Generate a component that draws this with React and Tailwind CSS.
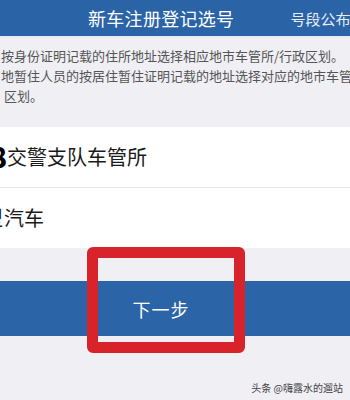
export default function App() {
  const font = { fontFamily: '"Noto Sans CJK SC", "Noto Sans", sans-serif' };
  return (
    <div className="relative w-[350px] h-[400px] overflow-hidden bg-[#efeff4]" style={font}>
      <div className="flex items-center h-[36px] bg-[#2b63a7] pl-[88px] gap-[56px] whitespace-nowrap overflow-hidden">
        <div className="text-white text-[18px] leading-none tracking-[0.3px]">新车注册登记选号</div>
        <div className="text-[#e8eef8] text-[15px] leading-none">号段公布</div>
      </div>
      <div className="h-[2px] bg-[#e4ecf6]" />
      <div className="pt-[8px] text-[13px] leading-[20px] text-[#555] whitespace-nowrap overflow-hidden">
        <div className="pl-[1px]">按身份证明记载的住所地址选择相应地市车管所/行政区划。</div>
        <div className="pl-[1px]">地暂住人员的按居住暂住证明记载的地址选择对应的地市车管所/行政</div>
        <div className="pl-[4px]">区划。</div>
      </div>
      <div className="mt-[21px] bg-white">
        <div className="h-[60px] flex items-center text-[20px] text-[#1a1a1a] whitespace-nowrap">
          <span className="relative inline-block shrink-0 w-[7px] h-[30px] overflow-hidden">
            <span className="absolute right-0 top-[-3px] font-black text-black text-[28px] leading-[34px]">8</span>
          </span>
          <span>交警支队车管所</span>
        </div>
        <div className="h-px bg-[#e6e6e6]" />
        <div className="h-[60px] flex items-center text-[20px] text-[#1a1a1a] whitespace-nowrap">
          <span className="relative inline-block shrink-0 w-[3px] h-[28px] overflow-hidden">
            <span className="absolute right-0 top-0 leading-[28px]">型</span>
          </span>
          <span className="ml-[1px]">汽车</span>
        </div>
      </div>
      <div className="h-[33px]" />
      <div className="h-[55px] bg-[#2c64a8] flex items-center justify-center pr-[28px]">
        <span className="text-white text-[18px] leading-none tracking-[1px]">下一步</span>
      </div>
      <div className="absolute left-[87px] top-[247px] w-[158px] h-[106px] border-[11px] border-[#d8232a] rounded-[6px]" />
      <div className="absolute right-[7px] top-[381px] text-[10px] leading-[14px] text-[#444]">头条 @嗨露水的遛站</div>
    </div>
  );
}
